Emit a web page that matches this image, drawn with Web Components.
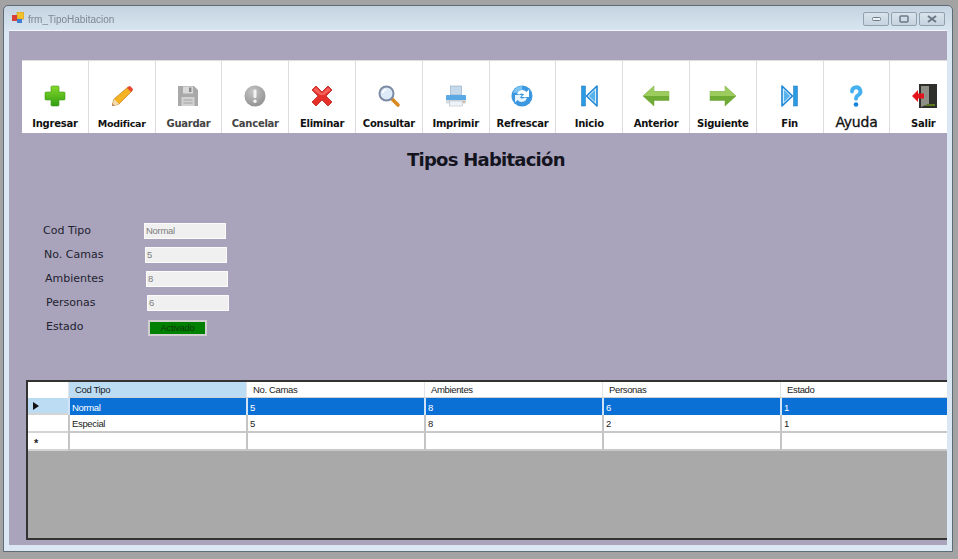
<!DOCTYPE html>
<html>
<head>
<meta charset="utf-8">
<style>
  html, body { margin: 0; height: 100%; background: #a3a3a3; overflow: hidden; }
  body { font-family: "Liberation Sans", sans-serif; }
</style>
</head>
<body>
<win-frame caption="frm_TipoHabitacion">
  <tool-bar>
    <tool-button label="Ingresar" icon="plus"></tool-button>
    <tool-button label="Modificar" icon="pencil" small></tool-button>
    <tool-button label="Guardar" icon="save" muted></tool-button>
    <tool-button label="Cancelar" icon="cancel" muted></tool-button>
    <tool-button label="Eliminar" icon="cross"></tool-button>
    <tool-button label="Consultar" icon="search"></tool-button>
    <tool-button label="Imprimir" icon="print"></tool-button>
    <tool-button label="Refrescar" icon="refresh"></tool-button>
    <tool-button label="Inicio" icon="first"></tool-button>
    <tool-button label="Anterior" icon="prev"></tool-button>
    <tool-button label="Siguiente" icon="next"></tool-button>
    <tool-button label="Fin" icon="last"></tool-button>
    <tool-button label="Ayuda" icon="help" big></tool-button>
    <tool-button label="Salir" icon="exit"></tool-button>
  </tool-bar>
  <form-title>Tipos Habitación</form-title>
  <form-panel>
    <form-row label="Cod Tipo" value="Normal" indent="0" gap="101"></form-row>
    <form-row label="No. Camas" value="5" indent="1" gap="101"></form-row>
    <form-row label="Ambientes" value="8" indent="2" gap="101"></form-row>
    <form-row label="Personas" value="6" indent="3" gap="101"></form-row>
    <form-row label="Estado" value="Activado" indent="3" gap="102" status></form-row>
  </form-panel>
  <data-grid></data-grid>
</win-frame>

<script>
const ICONS = {
  plus: `<defs><linearGradient id="g" x1="0" y1="0" x2="0" y2="1"><stop offset="0" stop-color="#86d92a"/><stop offset="1" stop-color="#2f9e12"/></linearGradient></defs>
    <path d="M9 2h6a1 1 0 0 1 1 1v5h5a1 1 0 0 1 1 1v6a1 1 0 0 1-1 1h-5v5a1 1 0 0 1-1 1H9a1 1 0 0 1-1-1v-5H3a1 1 0 0 1-1-1V9a1 1 0 0 1 1-1h5V3a1 1 0 0 1 1-1z" fill="url(#g)" stroke="#3f9a16" stroke-width=".6"/>`,
  pencil: `<path d="M18 3l4 4L9 20l-5 1.500L2.500 20 4 15z" fill="#f5b324" stroke="#b5700f" stroke-width=".6"/>
    <path d="M17 4l4 4 1.500-1.500a1.500 1.500 0 0 0 0-2.100l-1.900-1.900a1.500 1.500 0 0 0-2.100 0z" fill="#e8452f"/>
    <path d="M4 15l5 5-6.500 2z" fill="#f3dcb3"/><path d="M2.800 20l1.300 1.300-2 .7z" fill="#7a2a12"/>`,
  save: `<path d="M2 2h16l4 4v16H2z" fill="#a9a9a9"/><rect x="7" y="2.500" width="10" height="7" fill="#d9d9d9"/><rect x="13" y="3.500" width="2.400" height="4.500" fill="#8a8a8a"/>
    <rect x="5.500" y="13" width="13" height="9" fill="#d2d2d2"/><path d="M7.500 16h9M7.500 19h9" stroke="#a3a3a3"/>`,
  cancel: `<defs><radialGradient id="c" cx=".4" cy=".3" r=".8"><stop offset="0" stop-color="#c6c6c6"/><stop offset="1" stop-color="#8c8c8c"/></radialGradient></defs>
    <circle cx="12" cy="12" r="10.500" fill="url(#c)"/><rect x="10.500" y="5.500" width="3" height="8.500" rx="1.300" fill="#f4f4f4"/><circle cx="12" cy="17.300" r="1.700" fill="#f4f4f4"/>`,
  cross: `<path d="M2 6l4-4 6 6 6-6 4 4-6 6 6 6-4 4-6-6-6 6-4-4 6-6z" fill="#e5302a" stroke="#b9201c" stroke-width=".8" stroke-linejoin="round"/><path d="M3.500 6 6 3.500l6 6 6-6L20.500 6 14 11h-4z" fill="#f4605a"/>`,
  search: `<path d="M14.500 14.500 21 21" stroke="#d98a1f" stroke-width="3.600" stroke-linecap="round"/><circle cx="9.500" cy="9.500" r="7" fill="#dcebf7" stroke="#7d8aa3" stroke-width="2"/><path d="M5.800 9a4 4 0 0 1 3.500-3.500" stroke="#fff" stroke-width="1.500" fill="none"/>`,
  print: `<rect x="6.500" y="2" width="11" height="9" fill="#c5d9ea" stroke="#8fa9c0" stroke-width=".6"/><path d="M3 11h18a1 1 0 0 1 1 1v6H2v-6a1 1 0 0 1 1-1z" fill="#5ba9e3"/><rect x="2" y="16" width="20" height="3.500" fill="#d5dde4"/><rect x="5.500" y="17" width="13" height="5" fill="#eef3f7" stroke="#a8b6c2" stroke-width=".5"/><circle cx="20" cy="17.800" r=".8" fill="#e58a2e"/>`,
  refresh: `<circle cx="12" cy="12" r="10.500" fill="#3a97e0"/><path d="M3 9a9.500 9.500 0 0 1 9-7l.5 6z" fill="#7cc3f2"/><path d="M7 10a5.500 5.500 0 0 1 9.500-2l2.500-2.500V13h-7.500l2.500-2.500a3 3 0 0 0-4.500 0z" fill="#fff"/><path d="M17 14a5.500 5.500 0 0 1-9.500 2L5 18.500V11h7l-2 2.500a3 3 0 0 0 4.500 0z" fill="#e8f4fc"/>`,
  first: `<rect x="4.500" y="2" width="4" height="20" fill="#2b9be4" stroke="#1573bb" stroke-width=".5"/><path d="M20 2v20L9.500 12z" fill="#d3ecfb" stroke="#1d86d6" stroke-width="1.600" stroke-linejoin="round"/><path d="M18 6v12l-6-6z" fill="#58b2ee"/>`,
  prev: `<path d="M1 11 12 1v5.500h15v9H12V21z" fill="#6faa35" stroke="#6ea13a" stroke-width=".5" stroke-linejoin="round"/><path d="M1 11 12 1v5.500h15V11z" fill="#9ccb5e"/>`,
  next: `<path d="M27 11 16 1v5.500H1v9h15V21z" fill="#6faa35" stroke="#6ea13a" stroke-width=".5" stroke-linejoin="round"/><path d="M27 11 16 1v5.500H1V11z" fill="#9ccb5e"/>`,
  last: `<rect x="15.500" y="2" width="4" height="20" fill="#2b9be4" stroke="#1573bb" stroke-width=".5"/><path d="M4 2v20l10.500-10z" fill="#d3ecfb" stroke="#1d86d6" stroke-width="1.600" stroke-linejoin="round"/><path d="M6 6v12l6-6z" fill="#58b2ee"/>`,
  help: `<path d="M8 7.500a4.200 4.200 0 1 1 6.300 3.600c-1.500.9-2.300 1.800-2.300 3.700" fill="none" stroke="#45b0f0" stroke-width="3.800" stroke-linecap="round"/><circle cx="12" cy="20.500" r="2.300" fill="#1683dc"/>`,
  exit: `<rect x="10" y="0" width="18" height="24" fill="#2e2e2a"/><path d="M12 2h8v18l-8 3z" fill="#8f8f88"/><path d="M20 20h6v2H14z" fill="#5d7a20"/><path d="M3 12l6-6v3.500h6v5H9V18z" fill="#e3141c"/>`
};

// most icons fit 24x24, the arrows and the door are wider
const ICON_BOX = { prev: [28, 22], next: [28, 22], exit: [28, 24] };

class WinFrame extends HTMLElement {
  constructor() {
    super();
    this.attachShadow({ mode: "open" });
    this.shadowRoot.innerHTML = `
      <style>
        :host { display: flex; flex-direction: column; box-sizing: border-box; width: 950px; height: 547px; margin: 5px 0 0 3px;
          border: 1px solid #5f6b76; border-radius: 5px 5px 0 0; background: linear-gradient(#c5d3e0, #dbe8f4 28px); padding: 0 5px 6px 5px; filter: blur(.5px); }
        .title { display: flex; align-items: center; height: 24px; flex: none; }
        .logo { width: 12px; height: 12px; margin: 0 4px 0 3px; }
        .cap { font: 10px "Liberation Sans", sans-serif; color: #7c8894; position: relative; top: 1px; }
        .btns { margin-left: auto; display: flex; gap: 2px; padding-right: 2px; margin-top: 1px; }
        .btns span { display: flex; align-items: center; justify-content: center; width: 24px; height: 12px; border: 1px solid #93a1ae; border-radius: 2px; background: linear-gradient(#d9e3ec, #c6d3df); }
        .client { flex: 1; display: flex; flex-direction: column; background: #a9a4bc; border-top: 1px solid #f3f7fb; overflow: hidden; }
      </style>
      <div class="title">
        <svg class="logo" viewBox="0 0 12 12"><rect x="5" y="0" width="7" height="7" fill="#f2c12e" stroke="#b88a14" stroke-width=".5"/><rect x="0" y="3" width="5" height="6" fill="#d6423a"/><rect x="5" y="7" width="5" height="4" fill="#3f7fd0"/></svg>
        <span class="cap"></span>
        <div class="btns">
          <span><svg width="9" height="5"><rect x=".5" y="1.500" width="8" height="3" rx="1" fill="#eef2f6" stroke="#6c7884"/></svg></span>
          <span><svg width="10" height="8"><rect x="1" y="1" width="8" height="6" rx="1" fill="none" stroke="#6c7884" stroke-width="1.500"/></svg></span>
          <span><svg width="10" height="8"><path d="M1 1l8 6M9 1 1 7" stroke="#6c7884" stroke-width="2"/></svg></span>
        </div>
      </div>
      <div class="client"><slot></slot></div>`;
    this.shadowRoot.querySelector(".cap").textContent = this.getAttribute("caption");
  }
}

class ToolBar extends HTMLElement {
  constructor() {
    super();
    this.attachShadow({ mode: "open" });
    this.shadowRoot.innerHTML = `
      <style>
        :host { display: flex; flex: none; height: 73px; margin: 29px 0 0 13px; background: #dcdcdc; gap: 1px; padding: 1px 0 0 0; box-sizing: border-box; width: 925px; overflow: hidden; }
      </style>
      <slot></slot>`;
  }
}

class ToolButton extends HTMLElement {
  constructor() {
    super();
    this.attachShadow({ mode: "open" });
    const big = this.hasAttribute("big");
    const size = big ? 14 : this.hasAttribute("small") ? 9.5 : 10;
    const name = this.getAttribute("icon");
    const [w, h] = ICON_BOX[name] || [24, 24];
    this.shadowRoot.innerHTML = `
      <style>
        :host { display: flex; flex: none; flex-direction: column; align-items: center; width: 65.8px; height: 72px; background: #fff; }
        svg { height: 24px; margin-top: 23px; }
        span { margin-top: auto; padding-bottom: ${big ? 3 : 1}px; font: ${big ? 400 : 700} ${size}px/16px "DejaVu Sans", sans-serif; letter-spacing: -.25px; white-space: nowrap; color: ${this.hasAttribute("muted") ? "#444" : "#111"}; ${big ? "-webkit-text-stroke: .3px #111;" : ""} }
      </style>
      <svg viewBox="0 0 ${w} ${h}" width="${w}">${ICONS[name]}</svg>
      <span>${this.getAttribute("label")}</span>`;
  }
}

class FormTitle extends HTMLElement {
  constructor() {
    super();
    this.attachShadow({ mode: "open" });
    this.shadowRoot.innerHTML = `
      <style>
        :host { display: block; flex: none; margin: 15px 0 0 398px; font: 700 18px/24px "DejaVu Sans", sans-serif; letter-spacing: -.75px; color: #14141e; white-space: nowrap; }
      </style>
      <slot></slot>`;
  }
}

class FormPanel extends HTMLElement {
  constructor() {
    super();
    this.attachShadow({ mode: "open" });
    this.shadowRoot.innerHTML = `
      <style>
        :host { display: flex; flex: none; flex-direction: column; gap: 8px; margin: 51px 0 0 34px; }
      </style>
      <slot></slot>`;
  }
}

class FormRow extends HTMLElement {
  constructor() {
    super();
    this.attachShadow({ mode: "open" });
    const status = this.hasAttribute("status");
    this.shadowRoot.innerHTML = `
      <style>
        :host { display: flex; align-items: center; height: 16px; margin-left: ${this.getAttribute("indent")}px; }
        .label { width: ${this.getAttribute("gap")}px; flex: none; position: relative; top: -1px; font: 11px "DejaVu Sans", sans-serif; color: #22222e; }
        .field { box-sizing: border-box; width: 82px; height: 16px; padding-left: 1px; background: #f0f0f0; border: 1px solid #fbfbfb; font: 9.5px/14px "Liberation Sans", sans-serif; letter-spacing: -.3px; color: #7d7d7d; }
        .status { box-sizing: border-box; width: 59px; height: 16px; margin-top: 1px; background: #008000; border: 2px solid #d0d0d0; text-align: center; font: 9.5px/12px "Liberation Sans", sans-serif; letter-spacing: -.3px; color: #0a3a0a; }
      </style>
      <span class="label">${this.getAttribute("label")}</span>
      <span class="${status ? "status" : "field"}">${this.getAttribute("value")}</span>`;
  }
}

class DataGrid extends HTMLElement {
  constructor() {
    super();
    this.attachShadow({ mode: "open" });
    const cols = ["Cod Tipo", "No. Camas", "Ambientes", "Personas", "Estado"];
    const rows = [["Normal", "5", "8", "6", "1"], ["Especial", "5", "8", "2", "1"], ["", "", "", "", ""]];
    const head = cols.map((c, i) => `<div class="hd ${i === 0 ? "on" : ""}">${c}</div>`).join("");
    const body = rows.map((r, n) => `
      <div class="rh ${n === 0 ? "cur" : ""}">${n === 0 ? '<svg width="6" height="8"><path d="M0 0l6 4-6 4z" fill="#111"/></svg>' : n === 2 ? "<b>*</b>" : ""}</div>
      ${r.map(v => `<div class="td ${n === 0 ? "sel" : ""}">${v}</div>`).join("")}`).join("");
    this.shadowRoot.innerHTML = `
      <style>
        :host { display: block; flex: none; box-sizing: border-box; height: 160px; margin: 45px 0 0 17px; width: 921px; background: #a9a9a9; border: solid #333; border-width: 2px 0 2px 2px; overflow: hidden; font: 9.5px "Liberation Sans", sans-serif; letter-spacing: -.35px; color: #222; }
        .grid { display: grid; grid-template-columns: 40px 178px 178px 178px 178px 167px; grid-template-rows: 16px 17px 18px 18px; }
        .corner, .hd, .rh, .td { box-sizing: border-box; display: flex; align-items: center; background: #fff; }
        .hd { padding-left: 6px; border-left: 1px solid #e4e4e4; border-bottom: 1px solid #d0d0d0; }
        .hd.on { background: #bcdcf4; }
        .rh { padding-left: 6px; border-bottom: 2px solid #d4d4d4; }
        .rh.cur { background: #bcdcf4; padding-left: 5px; }
        .rh b { font: 700 11px "Liberation Sans", sans-serif; padding-top: 3px; }
        .td { padding-left: 2px; padding-top: 1px; border-left: 2px solid #c4c4c4; border-bottom: 2px solid #c8c8c8; }
        .td.sel { background: #0a70d6; color: #fff; border-left-color: #cfe2f6; border-bottom: 0; }
      </style>
      <div class="grid"><div class="corner"></div>${head}${body}</div>`;
  }
}

customElements.define("win-frame", WinFrame);
customElements.define("tool-bar", ToolBar);
customElements.define("tool-button", ToolButton);
customElements.define("form-title", FormTitle);
customElements.define("form-panel", FormPanel);
customElements.define("form-row", FormRow);
customElements.define("data-grid", DataGrid);
</script>
</body>
</html>
